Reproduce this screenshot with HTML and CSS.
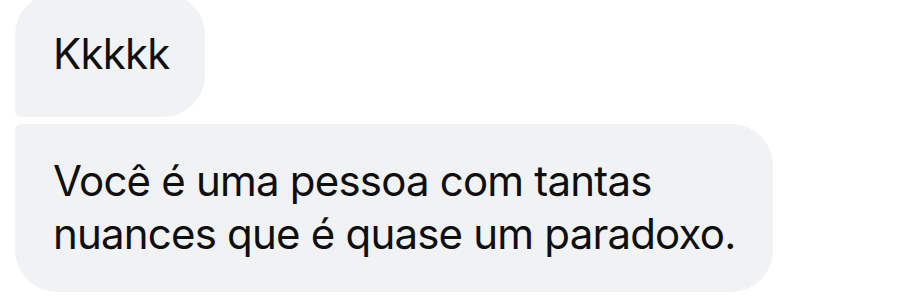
FILE: index.html
```html
<!DOCTYPE html>
<html lang="pt">
<head>
<meta charset="utf-8">
<title>Chat</title>
<link rel="stylesheet" href="styles.css">
</head>
<body>
<div class="thread">
  <div class="bubble bubble-first">Kkkkk</div>
  <div class="bubble bubble-last">Você é uma pessoa com tantas nuances que é quase um paradoxo.</div>
</div>
</body>
</html>
```
FILE: styles.css
```css
html, body {
  margin: 0;
  padding: 0;
  background: #ffffff;
}
body {
  width: 903px;
  height: 301px;
  overflow: hidden;
  font-family: Inter, "Noto Sans", "Liberation Sans", sans-serif;
}
.thread {
  display: flex;
  flex-direction: column;
  align-items: flex-start;
  gap: 7px;
  margin-top: -7px;
  padding-left: 15px;
}
.bubble {
  background: #f1f2f4;
  color: #0f0f10;
  font-size: 42px;
  line-height: 53px;
  letter-spacing: -0.8px;
  box-sizing: border-box;
}
.bubble-first {
  padding: 34px 36px 37px 38px;
  border-radius: 42px 42px 42px 6px;
}
.bubble-last {
  width: 758px;
  padding: 30px 16px 32px 38px;
  border-radius: 6px 42px 42px 42px;
}
```
